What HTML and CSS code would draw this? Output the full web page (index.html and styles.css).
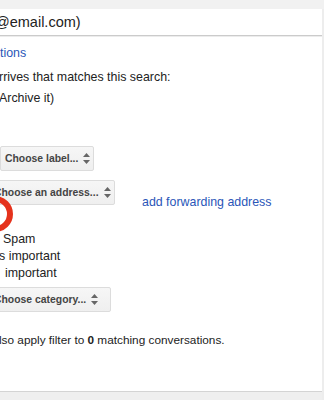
FILE: index.html
```html
<!DOCTYPE html>
<html lang="en">
<head>
  <meta charset="UTF-8" />
  <meta name="viewport" content="width=device-width, initial-scale=1.0"/>
  <title>Create a filter</title>
  <link rel="stylesheet" href="styles.css">
</head>
<body>

  <div class="top-band"></div>

  <div class="dialog">
    <div class="dialog-title">@email.com)</div>

    <div class="dialog-body">
      <a class="link back-link" href="#">tions</a>
      <div class="line search-line">rrives that matches this search:</div>
      <div class="line archive-line">Archive it)</div>

      <div class="select select-label">
        <span>Choose label...</span>
        <svg class="arrows" width="7" height="11" viewBox="0 0 7 11"><path d="M3.5 0 L7 4 H0 Z M3.5 11 L7 7 H0 Z" fill="#666"/></svg>
      </div>

      <div class="forward-row">
        <div class="select select-address">
          <span>Choose an address...</span>
          <svg class="arrows" width="7" height="11" viewBox="0 0 7 11"><path d="M3.5 0 L7 4 H0 Z M3.5 11 L7 7 H0 Z" fill="#666"/></svg>
        </div>
        <a class="link forward-link" href="#">add forwarding address</a>
      </div>

      <div class="checks">
        <div class="line spam-line">Spam</div>
        <div class="line always-line">s important</div>
        <div class="line never-line">important</div>
      </div>

      <div class="select select-category">
        <span>Choose category...</span>
        <svg class="arrows" width="7" height="11" viewBox="0 0 7 11"><path d="M3.5 0 L7 4 H0 Z M3.5 11 L7 7 H0 Z" fill="#666"/></svg>
      </div>

      <div class="line apply-line">lso apply filter to <b>0</b> matching conversations.</div>

      <!-- hand drawn marker from the screenshot -->
      <svg class="marker" width="44" height="44" viewBox="0 0 44 44">
        <circle cx="19" cy="22" r="15" fill="none" stroke="#e5321c" stroke-width="6"/>
      </svg>
    </div>

    <div class="dialog-footer"></div>
  </div>

</body>
</html>
```

FILE: styles.css
```css
body {
  font-family: 'Liberation Sans', Arial, sans-serif;
  font-size: 12.4px;
  margin: 0;
  width: 324px;
  height: 400px;
  overflow: hidden;
  color: #222;
  background: #fff;
  display: flex;
  flex-direction: column;
}

.top-band {
  height: 9px;
  background: #f1f1f1;
}

.dialog {
  flex: 1;
  display: flex;
  flex-direction: column;
  border-right: 2px solid #ededed;
}

.dialog-title {
  height: 26px;
  line-height: 26px;
  font-size: 14.5px;
  text-indent: -5px;
  white-space: nowrap;
  color: #222;
  border-bottom: 1px solid #cbcbcb;
  box-shadow: 0 1px 0 #ececec;
}

.dialog-body {
  position: relative;
  flex: 1;
  display: flex;
  flex-direction: column;
  align-items: flex-start;
  overflow: hidden;
}

.line {
  line-height: 18px;
  white-space: nowrap;
}

.link {
  color: #2a56b8;
  text-decoration: none;
  line-height: 18px;
  white-space: nowrap;
}

.back-link {
  margin-top: 8px;
}

.search-line {
  margin-top: 6px;
  text-indent: -1px;
}

.archive-line {
  margin-top: 2px;
  text-indent: -1px;
  line-height: 20px;
}

.select {
  height: 25px;
  display: flex;
  align-items: center;
  gap: 5px;
  box-sizing: border-box;
  border: 1px solid #dcdcdc;
  border-radius: 2px;
  background: linear-gradient(#f6f6f6, #efefef);
  font-size: 10.4px;
  font-weight: bold;
  color: #444;
  white-space: nowrap;
}

.arrows {
  flex-shrink: 0;
}

.select-label {
  width: 94px;
  margin-top: 38px;
  padding-left: 4px;
}

.forward-row {
  display: flex;
  align-items: flex-start;
  margin-top: 9px;
}

.select-address {
  width: 122px;
  margin-left: -7px;
}

.forward-link {
  margin-top: 13px;
  margin-left: 27px;
}

.checks {
  margin-top: 20px;
  display: flex;
  flex-direction: column;
  align-items: flex-start;
}

.checks .line {
  line-height: 17px;
}

.spam-line {
  margin-left: 3px;
}

.always-line {
  text-indent: -1px;
}

.never-line {
  margin-left: 5px;
}

.select-category {
  width: 118px;
  margin-top: 5px;
  margin-left: -7px;
}

.apply-line {
  margin-top: 19px;
  text-indent: -1px;
  font-size: 11.8px;
}

.marker {
  position: absolute;
  left: -24px;
  top: 156px;
}

.dialog-footer {
  height: 8px;
  background: #efefef;
  border-top: 1px solid #d4d4d4;
}
```
